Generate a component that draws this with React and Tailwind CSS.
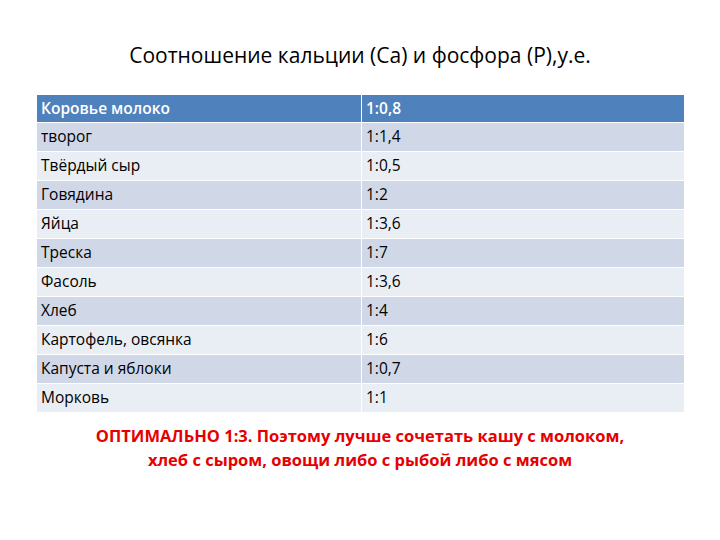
const rows = [
  ['творог', '1:1,4'],
  ['Твёрдый сыр', '1:0,5'],
  ['Говядина', '1:2'],
  ['Яйца', '1:3,6'],
  ['Треска', '1:7'],
  ['Фасоль', '1:3,6'],
  ['Хлеб', '1:4'],
  ['Картофель, овсянка', '1:6'],
  ['Капуста и яблоки', '1:0,7'],
  ['Морковь', '1:1'],
];

export default function App() {
  return (
    <div className="w-[720px] h-[540px] bg-white text-black" style={{ fontFamily: '"Open Sans", "Noto Sans", sans-serif' }}>
      <div className="pt-[40px] text-center text-[21px] leading-[30px]">
        Соотношение кальции (Са) и фосфора (Р),у.е.
      </div>

      <div className="ml-[37px] mt-[25px] w-[647px] flex flex-col gap-px text-[15.5px]">
        <div className="flex h-[27px] bg-[#4f81bd] text-white font-semibold">
          <div className="w-[324px] pl-[4px] flex items-center">Коровье молоко</div>
          <div className="w-px bg-white" />
          <div className="flex-1 pl-[4px] flex items-center">1:0,8</div>
        </div>
        {rows.map(([name, ratio], i) => (
          <div key={name} className={`flex h-[28px] ${i % 2 === 0 ? 'bg-[#d0d8e8]' : 'bg-[#e9edf4]'}`}>
            <div className="w-[324px] pl-[4px] flex items-center">{name}</div>
            <div className="w-px bg-white" />
            <div className="flex-1 pl-[4px] flex items-center">{ratio}</div>
          </div>
        ))}
      </div>

      <div className="mt-[12px] text-center text-[16.5px] leading-[24px] font-bold text-[#e60000]">
        ОПТИМАЛЬНО 1:3. Поэтому лучше сочетать кашу с молоком,<br />
        хлеб с сыром, овощи либо с рыбой либо с мясом
      </div>
    </div>
  );
}
